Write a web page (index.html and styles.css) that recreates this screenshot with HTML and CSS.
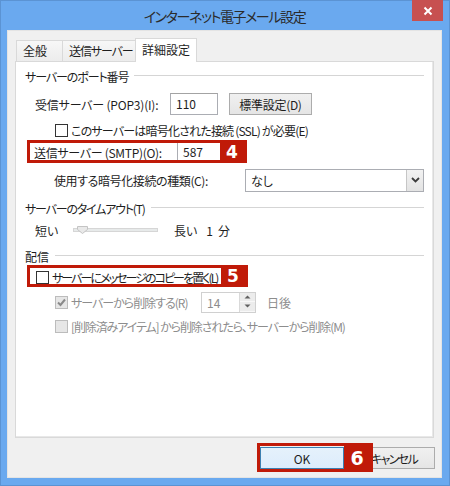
FILE: index.html
```html
<!DOCTYPE html>
<html lang="ja">
<head>
<meta charset="utf-8">
<title>インターネット電子メール設定</title>
<link rel="stylesheet" href="styles.css">
</head>
<body>
<div class="window">
  <div class="titlebar">
    <div class="title">インターネット電子メール設定</div>
    <div class="close"><svg width="10" height="10" viewBox="0 0 10 10"><path d="M1.5 1.5 L8.5 8.5 M8.5 1.5 L1.5 8.5" stroke="#fff" stroke-width="2"/></svg></div>
  </div>
  <div class="client">
    <div class="tabs">
      <div class="tab t1">全般</div>
      <div class="tab t2">送信サーバー</div>
      <div class="tab active">詳細設定</div>
    </div>
    <div class="panel">
      <div class="group h1"><span class="ht1">サーバーのポート番号</span><i class="rule"></i></div>
      <div class="row pop">
        <span class="lbl">受信サーバー (POP3)(I):</span>
        <span class="input w48">110</span>
        <span class="btn std">標準設定(D)</span>
      </div>
      <div class="row ssl">
        <span class="cb"></span><span class="txt ssltxt">このサーバーは暗号化された接続 (SSL) が必要(E)</span>
      </div>
      <div class="row smtp">
        <span class="lbl">送信サーバー (SMTP)(O):</span>
        <span class="input w48 smtpin">587</span>
      </div>
      <div class="row enc">
        <span class="lbl enclbl">使用する暗号化接続の種類(C):</span>
        <span class="select"><span class="val">なし</span><span class="arrow"><svg width="9" height="6" viewBox="0 0 9 6"><path d="M1 1 L4.5 4.5 L8 1" fill="none" stroke="#3c3c3c" stroke-width="1.8"/></svg></span></span>
      </div>
      <div class="group h2"><span class="ht2">サーバーのタイムアウト(T)</span><i class="rule"></i></div>
      <div class="row slider">
        <span class="short">短い</span>
        <span class="track"><span class="thumb"><svg width="11" height="8" viewBox="0 0 11 8"><path d="M0.5 0.5 H10.5 V3.5 L5.5 7.5 L0.5 3.5 Z" fill="#e9e9e9" stroke="#c4c4c4"/></svg></span></span>
        <span class="long">長い</span><span class="num">1</span><span class="min">分</span>
      </div>
      <div class="group h3"><span>配信</span><i class="rule"></i></div>
      <div class="row copy">
        <span class="cb"></span><span class="txt copytxt">サーバーにメッセージのコピーを置く(L)</span>
      </div>
      <div class="row del">
        <span class="cb dis"><svg width="11" height="11" viewBox="0 0 11 11"><path d="M2 5.5 L4.5 8 L9 2.5" fill="none" stroke="#8a8a8a" stroke-width="2"/></svg></span>
        <span class="txt dim delt">サーバーから削除する(R)</span>
        <span class="spin"><span class="sval">14</span><span class="sbtns"><span class="sb"><svg width="7" height="4" viewBox="0 0 7 4"><path d="M0.5 3.5 L3.5 0.5 L6.5 3.5 Z" fill="#606060"/></svg></span><span class="sb"><svg width="7" height="4" viewBox="0 0 7 4"><path d="M0.5 0.5 L3.5 3.5 L6.5 0.5 Z" fill="#606060"/></svg></span></span></span>
        <span class="txt dim days">日後</span>
      </div>
      <div class="row deleted">
        <span class="cb dis"></span><span class="txt dim deltxt">[削除済みアイテム] から削除されたら、サーバーから削除(M)</span>
      </div>
    </div>
    <div class="buttons">
      <span class="btn ok">OK</span>
      <span class="btn cancel">キャンセル</span>
    </div>
    <div class="mark m4"><span class="badge">4</span></div>
    <div class="mark m5"><span class="badge">5</span></div>
    <div class="mark m6"><span class="badge">6</span></div>
  </div>
</div>
</body>
</html>
```
FILE: styles.css
```css
* { box-sizing: border-box; }
html, body { margin: 0; padding: 0; }
body {
  width: 450px; height: 486px; overflow: hidden;
  font-family: "Noto Sans CJK JP", "Noto Sans", sans-serif;
  font-feature-settings: "palt";
  font-size: 12px;
  color: #1e1e1e;
  white-space: nowrap;
}
.window {
  width: 450px; height: 486px;
  background: #6aa9ef;
  border: 1px solid #5b93d3;
  display: flex; flex-direction: column;
  padding: 0 7px 7px 6px;
}
.titlebar {
  height: 29px; position: relative;
  display: flex; align-items: center; justify-content: center;
}
.title { font-size: 14px; letter-spacing: -1.4px; color: #2b2b2b; margin-top: 1px; }
.close {
  position: absolute; right: -1px; top: -1px;
  width: 31px; height: 21px; background: #c75050;
  display: flex; align-items: center; justify-content: center;
}
.client {
  flex: 1; background: #f0f0f0; position: relative;
  border: 1px solid #e4e4e4;
  padding: 7px 6px 0 7px;
}
.tabs { display: flex; align-items: flex-end; height: 23px; padding-left: 1px; position: relative; z-index: 1; }
.tab {
  height: 21px; padding: 0 0 0 6px; line-height: 19px;
  border: 1px solid #d9d9d9; border-bottom: none; margin-right: -1px;
  background: linear-gradient(#f7f7f7, #ececec);
}
.t1 { width: 47px; }
.t2 { width: 74px; letter-spacing: -1.1px; }
.tab.active { height: 24px; width: 62px; background: #fff; line-height: 22px; margin-bottom: -1px; }
.panel {
  width: 419px; height: 377px; background: #fff;
  border: 1px solid #d9d9d9;
  padding: 6px 9px 0 9px;
  box-shadow: inset -1px -1px 0 #e8e8e8;
}
.group { display: flex; align-items: center; height: 16px; }
.group .rule { flex: 1; height: 2px; border-top: 1px solid #d5d5d5; border-bottom: 1px solid #fff; margin-left: 6px; }
.ht1 { letter-spacing: -1.1px; }
.ht2 { letter-spacing: -1.2px; }
.h2 { margin-top: 9px; }
.h3 { margin-top: 10px; }
.row { display: flex; align-items: center; }
.pop { height: 22px; margin-top: 9px; padding-left: 10px; }
.pop .lbl { width: 135px; letter-spacing: -0.2px; }
.input {
  height: 22px; border: 1px solid #abadb3; border-top-color: #a3a3a3; background: #fff;
  padding: 0 0 0 5px; line-height: 20px; display: inline-block;
}
.w48 { width: 48px; }
.btn {
  display: inline-flex; align-items: center; justify-content: center;
  height: 22px; border: 1px solid #acacac;
  background: linear-gradient(#f0f0f0, #e5e5e5);
}
.std { width: 83px; margin-left: 11px; letter-spacing: -0.3px; }
.ssl { height: 16px; margin-top: 7px; padding-left: 30px; }
.ssltxt { letter-spacing: -0.8px; }
.cb { width: 13px; height: 13px; border: 1px solid #333; background: #fff; display: inline-flex; align-items: center; justify-content: center; margin-right: 3px; }
.cb.dis { border-color: #bcbcbc; background: #e6e6e6; }
.smtp { height: 22px; margin-top: 3px; padding-left: 9px; }
.smtp .lbl { width: 143px; letter-spacing: -0.3px; }
.smtpin { height: 20px; line-height: 18px; }
.enc { height: 22px; margin-top: 6px; padding-left: 29px; }
.enclbl { width: 191px; letter-spacing: -0.4px; }
.select {
  width: 179px; height: 23px; border: 1px solid #abadb3; background: #fff;
  display: flex; align-items: center; justify-content: space-between; padding-left: 5px;
}
.arrow { width: 17px; height: 21px; background: linear-gradient(#f2f2f2, #e3e3e3); border-left: 1px solid #c6c6c6; display: flex; align-items: center; justify-content: center; }
.slider { height: 16px; margin-top: 6px; padding-left: 10px; }
.short { width: 38px; }
.track { width: 85px; height: 4px; background: #e7eaea; border: 1px solid #d6d6d6; position: relative; }
.thumb { position: absolute; left: 3px; top: -3px; line-height: 0; }
.long { margin-left: 16px; }
.num { margin-left: 9px; }
.min { margin-left: 5px; }
.copy { height: 16px; margin-top: 5px; padding-left: 11px; }
.copytxt { letter-spacing: -1.95px; }
.del { height: 20px; margin-top: 7px; padding-left: 30px; }
.dim { color: #8d8d8d; }
.delt { width: 130px; letter-spacing: -1px; }
.spin { width: 55px; height: 21px; border: 1px solid #d0d0d0; background: #fff; display: flex; justify-content: space-between; padding-left: 5px; color: #8d8d8d; line-height: 19px; }
.sbtns { width: 16px; display: flex; flex-direction: column; border-left: 1px solid #d9d9d9; }
.sb { flex: 1; background: #ececec; display: flex; align-items: center; justify-content: center; border-bottom: 1px solid #f8f8f8; }
.days { margin-left: 11px; }
.deleted { height: 16px; margin-top: 6px; padding-left: 30px; }
.deltxt { letter-spacing: -1.1px; }
.buttons { display: flex; justify-content: flex-end; gap: 7px; margin-top: 9px; }
.ok { width: 84px; background: linear-gradient(#e5f1fb, #dcecfc); border-color: #3c7fb1; }
.cancel { width: 84px; letter-spacing: -1.6px; padding-left: 2px; }
.mark { position: absolute; border: 3px solid #c01a08; display: flex; justify-content: flex-end; }
.badge { background: #c01a08; color: #fff; font-family: "DejaVu Sans", sans-serif; font-weight: bold; font-size: 17px; width: 24px; display: flex; align-items: center; justify-content: center; }
.m4 { left: 19px; top: 109px; width: 220px; height: 23px; }
.m5 { left: 19px; top: 234px; width: 221px; height: 22px; }
.m6 { left: 249px; top: 412px; width: 116px; height: 29px; }
.m6 .badge { width: 26px; font-size: 19px; }
```
